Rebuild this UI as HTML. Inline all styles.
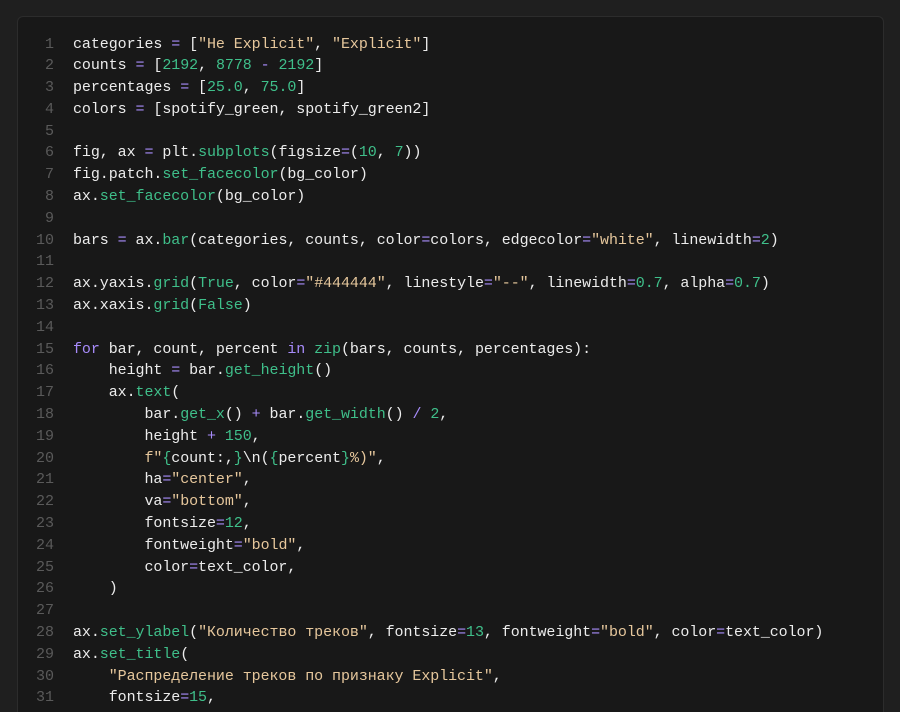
<!DOCTYPE html>
<html><head><meta charset="utf-8"><style>
html,body{margin:0;padding:0;background:#1f1f1f;width:900px;height:712px;overflow:hidden;position:relative}
.panel{position:absolute;left:17px;top:16px;width:865px;height:700px;background:#181818;border:1px solid #2c2c2c;border-bottom:none;border-radius:6px 6px 0 0}
pre{position:absolute;margin:0;top:33.5px;font-family:"Liberation Mono",monospace;font-size:15px;line-height:21.8px;color:#ececec;letter-spacing:-0.07px}
.ln{left:20px;width:34px;text-align:right;color:#5a5a5a;letter-spacing:0}
.code{left:73px}
.o{color:#a78bfa}.s{color:#e6c79c}.n{color:#3fbf8a}.f{color:#3fbf8a}.k{color:#a78bfa}
</style></head><body>
<div class="panel"></div>
<pre class="ln">1
2
3
4
5
6
7
8
9
10
11
12
13
14
15
16
17
18
19
20
21
22
23
24
25
26
27
28
29
30
31</pre>
<pre class="code">categories <span class="o">=</span> [<span class="s">"Не Explicit"</span>, <span class="s">"Explicit"</span>]
counts <span class="o">=</span> [<span class="n">2192</span>, <span class="n">8778</span> <span class="o">-</span> <span class="n">2192</span>]
percentages <span class="o">=</span> [<span class="n">25.0</span>, <span class="n">75.0</span>]
colors <span class="o">=</span> [spotify_green, spotify_green2]

fig, ax <span class="o">=</span> plt.<span class="f">subplots</span>(figsize<span class="o">=</span>(<span class="n">10</span>, <span class="n">7</span>))
fig.patch.<span class="f">set_facecolor</span>(bg_color)
ax.<span class="f">set_facecolor</span>(bg_color)

bars <span class="o">=</span> ax.<span class="f">bar</span>(categories, counts, color<span class="o">=</span>colors, edgecolor<span class="o">=</span><span class="s">"white"</span>, linewidth<span class="o">=</span><span class="n">2</span>)

ax.yaxis.<span class="f">grid</span>(<span class="n">True</span>, color<span class="o">=</span><span class="s">"#444444"</span>, linestyle<span class="o">=</span><span class="s">"--"</span>, linewidth<span class="o">=</span><span class="n">0.7</span>, alpha<span class="o">=</span><span class="n">0.7</span>)
ax.xaxis.<span class="f">grid</span>(<span class="n">False</span>)

<span class="k">for</span> bar, count, percent <span class="k">in</span> <span class="f">zip</span>(bars, counts, percentages):
    height <span class="o">=</span> bar.<span class="f">get_height</span>()
    ax.<span class="f">text</span>(
        bar.<span class="f">get_x</span>() <span class="o">+</span> bar.<span class="f">get_width</span>() <span class="o">/</span> <span class="n">2</span>,
        height <span class="o">+</span> <span class="n">150</span>,
        <span class="s">f"</span><span class="n">{</span>count:,<span class="n">}</span>\n(<span class="n">{</span>percent<span class="n">}</span><span class="s">%)"</span>,
        ha<span class="o">=</span><span class="s">"center"</span>,
        va<span class="o">=</span><span class="s">"bottom"</span>,
        fontsize<span class="o">=</span><span class="n">12</span>,
        fontweight<span class="o">=</span><span class="s">"bold"</span>,
        color<span class="o">=</span>text_color,
    )

ax.<span class="f">set_ylabel</span>(<span class="s">"Количество треков"</span>, fontsize<span class="o">=</span><span class="n">13</span>, fontweight<span class="o">=</span><span class="s">"bold"</span>, color<span class="o">=</span>text_color)
ax.<span class="f">set_title</span>(
    <span class="s">"Распределение треков по признаку Explicit"</span>,
    fontsize<span class="o">=</span><span class="n">15</span>,</pre>
</body></html>
